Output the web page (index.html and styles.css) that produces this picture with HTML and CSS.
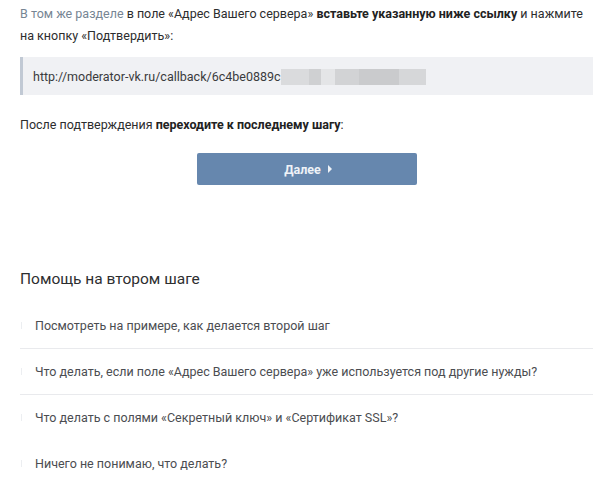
FILE: index.html
```html
<!DOCTYPE html>
<html lang="ru">
<head>
<meta charset="utf-8">
<link rel="stylesheet" href="styles.css">
</head>
<body>
<div class="page">
  <p class="intro"><span class="muted">В том же разделе</span> в поле «Адрес Вашего сервера» <b>вставьте указанную ниже ссылку</b> и нажмите на кнопку «Подтвердить»:</p>
  <div class="quote">
    <span class="url">http://moderator-vk.ru/callback/6c4be0889c</span><span class="blur"><i class="b1"></i><i class="b2"></i><i class="b3"></i><i class="b4"></i><i class="b5"></i><i class="b6"></i></span>
  </div>
  <p class="after">После подтверждения <b>переходите к последнему шагу</b>:</p>
  <div class="actions">
    <button class="next">Далее <span class="tri"></span></button>
  </div>
  <h2 class="help-title">Помощь на втором шаге</h2>
  <ul class="help">
    <li>Посмотреть на примере, как делается второй шаг</li>
    <li>Что делать, если поле «Адрес Вашего сервера» уже используется под другие нужды?</li>
    <li class="nosep">Что делать с полями «Секретный ключ» и «Сертификат SSL»?</li>
    <li class="nosep">Ничего не понимаю, что делать?</li>
  </ul>
</div>
</body>
</html>
```
FILE: styles.css
```css
html, body {
  margin: 0;
  padding: 0;
  background: #fff;
}
body {
  font-family: Roboto, "Liberation Sans", Arial, sans-serif;
  font-size: 12.5px;
  color: #2c2d2e;
}
.page {
  padding: 3px 20px 0 20px;
}
p {
  margin: 0;
  line-height: 22px;
}
b {
  font-weight: 700;
  color: #222;
}
.muted {
  color: #768593;
}
.quote {
  margin-top: 10px;
  height: 38px;
  box-sizing: border-box;
  background: #f0f1f4;
  border-left: 3px solid #c1c9d4;
  padding-left: 10px;
  display: flex;
  align-items: center;
  color: #3a3b3d;
}
.blur {
  display: flex;
  height: 16px;
  margin-top: 1px;
  filter: blur(0.6px);
}
.blur i {
  display: block;
  height: 16px;
}
.b1 { width: 28px; background: #dadbdd; }
.b2 { width: 12px; background: #cfd0d2; }
.b3 { width: 14px; background: #e4e5e7; }
.b4 { width: 24px; background: #d2d3d5; }
.b5 { width: 40px; background: #cacbcd; }
.b6 { width: 27px; background: #d6d7d9; }
.after {
  margin-top: 19px;
}
.actions {
  margin-top: 17px;
  display: flex;
  justify-content: center;
}
.next {
  width: 220px;
  height: 32px;
  border: none;
  border-radius: 2px;
  background: #6687ae;
  color: #eef2f7;
  font-family: Roboto, "Liberation Sans", Arial, sans-serif;
  font-size: 12.5px;
  font-weight: 700;
  display: flex;
  align-items: center;
  justify-content: center;
  gap: 7px;
  padding: 0 0 0 3px;
}
.tri {
  width: 0;
  height: 0;
  border-left: 4px solid #eef2f7;
  border-top: 4px solid transparent;
  border-bottom: 4px solid transparent;
}
.help-title {
  margin: 83px 0 0;
  font-size: 15.5px;
  font-weight: 400;
  line-height: 22px;
  color: #2d2e30;
}
.help {
  list-style: none;
  margin: 13px 0 0;
  padding: 0;
}
.help li {
  position: relative;
  padding: 12px 0 12px 15px;
  line-height: 21px;
  color: #4b4d51;
  border-bottom: 1px solid #e9eaed;
}
.help li.nosep {
  border-bottom-color: transparent;
}
.help li::before {
  content: "";
  position: absolute;
  left: 1px;
  top: 19px;
  width: 1px;
  height: 7px;
  background: #eceef1;
}
```
